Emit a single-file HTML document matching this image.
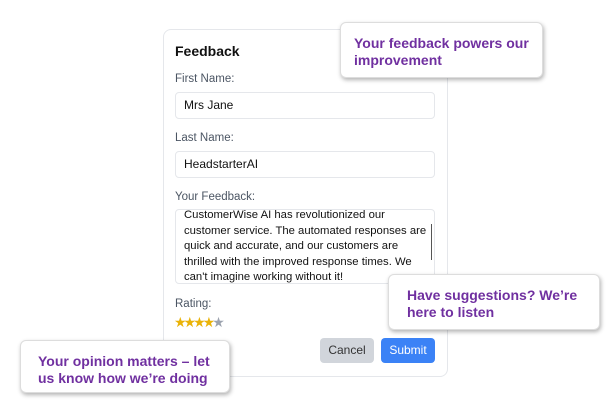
<!DOCTYPE html><html><head><style>
body{margin:0;width:612px;height:407px;background:#fff;position:relative;overflow:hidden;font-family:"Liberation Sans",sans-serif}
.card{position:absolute;left:163px;top:29px;width:283px;height:346px;border:1px solid #e5e7eb;border-radius:8px;background:#fff}
.a{position:absolute}
h1{position:absolute;left:175px;top:43px;margin:0;font-size:14px;font-weight:bold;color:#111}
.l{position:absolute;left:175px;font-size:11.5px;color:#4b5563}
.in{position:absolute;left:175px;width:260px;border:1px solid #e5e7eb;border-radius:4px;font-size:12px;color:#111;box-sizing:border-box;padding-left:8px}
.co{position:absolute;background:#fff;border:1px solid #ddd;border-radius:6px;box-shadow:1px 2px 4px rgba(0,0,0,.3);color:#7030a0;font-weight:bold;font-size:14px;line-height:17px;box-sizing:border-box}
.btn{position:absolute;top:338px;height:25px;width:54px;border-radius:4px;font-size:12px;text-align:center;line-height:25px}
</style></head><body>
<div class="card"></div>
<h1>Feedback</h1>
<div class="l" style="top:73px">First Name:</div>
<div class="in" style="top:92px;height:27px;line-height:25px">Mrs Jane</div>
<div class="l" style="top:132px">Last Name:</div>
<div class="in" style="top:151px;height:27px;line-height:25px">HeadstarterAI</div>
<div class="l" style="top:191px">Your Feedback:</div>
<div class="in" style="top:209px;height:75px;font-size:11.3px;line-height:15.5px;overflow:hidden;white-space:nowrap"><div style="margin-top:-2px">CustomerWise AI has revolutionized our<br>customer service. The automated responses are<br>quick and accurate, and our customers are<br>thrilled with the improved response times. We<br>can't imagine working without it!</div></div>
<div class="a" style="left:431px;top:224px;width:1px;height:36px;background:#555"></div>
<div class="l" style="top:298px">Rating:</div>
<div class="a" style="left:174px;top:314px;font-size:14px;letter-spacing:-3px;color:#eab308">★★★★<span style="color:#9ca3af">★</span></div>
<div class="btn" style="left:320px;background:#d1d5db;color:#333">Cancel</div>
<div class="btn" style="left:381px;background:#3b82f6;color:#fff">Submit</div>
<div class="co" style="left:340px;top:22px;width:203px;height:56px;padding:12px 0 0 13px">Your feedback powers our improvement</div>
<div class="co" style="left:388px;top:274px;width:212px;height:56px;padding:12px 0 0 18px">Have suggestions? We’re here to listen</div>
<div class="co" style="left:20px;top:340px;width:210px;height:53px;padding:12px 0 0 17px">Your opinion matters – let us know how we’re doing</div>
</body></html>
